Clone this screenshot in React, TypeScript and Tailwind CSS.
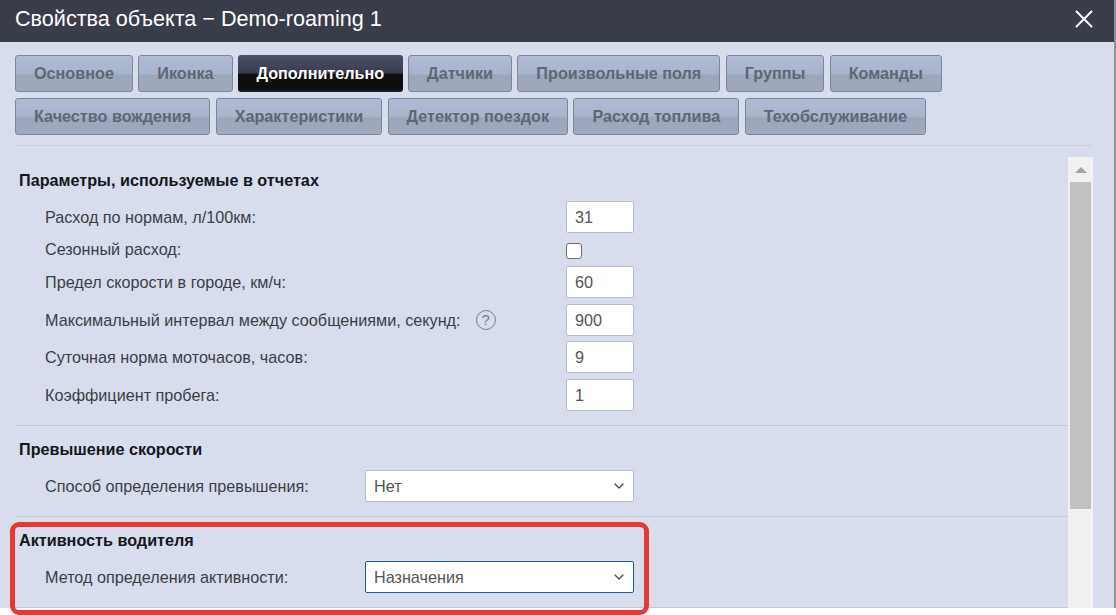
import { ChevronDown, X } from "lucide-react";

const topTabs = ["Основное", "Иконка", "Дополнительно", "Датчики", "Произвольные поля", "Группы", "Команды"];
const bottomTabs = ["Качество вождения", "Характеристики", "Детектор поездок", "Расход топлива", "Техобслуживание"];

function Tab({ label }: { label: string }) {
  if (label === "Дополнительно") {
    return (
      <div className="h-[37px] px-[18.5px] flex items-center rounded-[3px] text-white text-[16.2px] font-bold bg-[linear-gradient(#4b4f66_0%,#3a3d50_48%,#0e0e0e_52%,#0e0e0e_92%,#1a2233_100%)]">
        {label}
      </div>
    );
  }
  return (
    <div className="h-[37px] px-[18px] flex items-center rounded-[3px] border border-[#7d8698] text-[#5f6675] text-[16.2px] font-bold bg-[linear-gradient(#b0bcd6_0%,#a8b4cd_50%,#9ca6bb_55%,#a0aabf_100%)]">
      {label}
    </div>
  );
}

function NumberField({ value }: { value: string }) {
  return (
    <div className="w-[68px] h-[32px] pl-[8px] flex items-center bg-white border border-[#b9bcc4] rounded-[2px] text-[16.2px] text-[#555]">
      {value}
    </div>
  );
}

function SelectField({ value, active }: { value: string; active?: boolean }) {
  return (
    <div
      className={`w-[269px] h-[32px] pl-[8px] pr-[6px] flex items-center justify-between bg-white border rounded-[2px] text-[16.2px] text-[#555] ${
        active ? "border-[#1f5f8f]" : "border-[#b9bcc4]"
      }`}
    >
      {value}
      <ChevronDown size={16} strokeWidth={2.2} className="text-[#555]" />
    </div>
  );
}

function Row({ label, children, className }: { label: React.ReactNode; children: React.ReactNode; className?: string }) {
  return (
    <div className={`flex items-center justify-between pl-[30px] w-[619px] text-[16.2px] text-[#3a3d47] ${className ?? ""}`}>
      <div className="flex items-center">{label}</div>
      {children}
    </div>
  );
}

function Heading({ children }: { children: React.ReactNode }) {
  return <div className="pl-[4px] pt-[1px] h-[18px] leading-[18px] text-[16.2px] font-bold text-[#14161c]">{children}</div>;
}

export default function App() {
  return (
    <div className="relative w-[1116px] h-[615px] overflow-hidden bg-white font-['Liberation_Sans',Arial,sans-serif]">
      <div className="w-[1114px] h-[608px] bg-[#d7ddec] flex flex-col">
        <div className="h-[42px] shrink-0 bg-[#393c49] flex items-center justify-between pl-[15px] pr-[15px] pb-[4px] text-white">
          <span className="text-[21.6px]">Свойства объекта − Demo-roaming 1</span>
          <X size={30} strokeWidth={1.6} />
        </div>

        <div className="px-[15px] pt-[13px] flex flex-col gap-[6px]">
          <div className="flex gap-[5.4px]">
            {topTabs.map((t) => (
              <Tab key={t} label={t} />
            ))}
          </div>
          <div className="flex gap-[5.4px]">
            {bottomTabs.map((t) => (
              <Tab key={t} label={t} />
            ))}
          </div>
        </div>

        <div className="mx-[15px] mt-[10px] w-[1078px] border-t border-[#c9cfdd]" />

        <div className="mx-[15px] mt-[11px] w-[1078px] h-[451px] flex">
          <div className="w-[1053px] flex flex-col">
            <div className="pt-[13px]">
              <Heading>Параметры, используемые в отчетах</Heading>
            </div>
            <Row label="Расход по нормам, л/100км:" className="mt-[13px]">
              <NumberField value="31" />
            </Row>
            <Row label="Сезонный расход:" className="mt-[2px] h-[31px]">
              <div className="w-[68px]">
                <div className="w-[16px] h-[16px] mt-[2px] bg-white border border-[#6d7078] rounded-[3px]" />
              </div>
            </Row>
            <Row label={<span className="pt-[1px]">Предел скорости в городе, км/ч:</span>} className="mt-[2px]">
              <NumberField value="60" />
            </Row>
            <Row
              label={
                <>
                  Максимальный интервал между сообщениями, секунд:
                  <span className="ml-[15px] w-[20px] h-[20px] rounded-full border border-[#7a7d86] flex items-center justify-center text-[15px] text-[#7a7d86]">
                    ?
                  </span>
                </>
              }
              className="mt-[6px]"
            >
              <NumberField value="900" />
            </Row>
            <Row label="Суточная норма моточасов, часов:" className="mt-[5px]">
              <NumberField value="9" />
            </Row>
            <Row label="Коэффициент пробега:" className="mt-[6px]">
              <NumberField value="1" />
            </Row>

            <div className="mt-[14px] border-t border-[#c4c9d8]" />
            <div className="pt-[13px]">
              <Heading>Превышение скорости</Heading>
            </div>
            <Row label="Способ определения превышения:" className="mt-[13px]">
              <SelectField value="Нет" />
            </Row>

            <div className="mt-[14px] border-t border-[#c4c9d8]" />
            <div className="pt-[13px]">
              <Heading>Активность водителя</Heading>
            </div>
            <Row label="Метод определения активности:" className="mt-[13px]">
              <SelectField value="Назначения" active />
            </Row>
            <div className="mt-[14px] border-t border-[#c4c9d8]" />
          </div>

          <div className="w-[25px] h-full bg-[#f1f1f1] flex flex-col items-center">
            <div className="h-[25px] shrink-0 flex items-center justify-center">
              <div className="w-0 h-0 border-x-[6px] border-x-transparent border-b-[6px] border-b-[#a3a3a3]" />
            </div>
            <div className="w-[21px] h-[327px] bg-[#c1c1c1]" />
          </div>
        </div>
      </div>

      <div className="absolute right-0 top-0 w-[2px] h-[608px] bg-[#8f919b]" />
      <div className="absolute left-[10px] top-[522px] w-[639px] h-[93px] border-[5px] border-[#e53935] rounded-[9px]" />
    </div>
  );
}
